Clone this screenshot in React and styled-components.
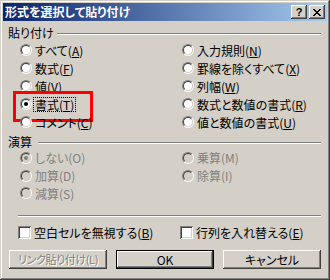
import React from 'react';
import styled, { createGlobalStyle } from 'styled-components';

const Global = createGlobalStyle`
  html, body { margin: 0; padding: 0; background: #d4d0c8; }
  * { box-sizing: border-box; }
`;

const FONT = `"Noto Sans CJK JP", "Liberation Sans", sans-serif`;

const Window = styled.div`
  width: 330px;
  height: 280px;
  padding: 3px;
  background: #d4d0c8;
  box-shadow: inset -1px -1px #404040, inset 1px 1px #d4d0c8,
    inset -2px -2px #808080, inset 2px 2px #ffffff;
  display: flex;
  flex-direction: column;
  font-family: ${FONT};
  font-size: 12px;
  color: #000;
  font-feature-settings: "palt";
`;

const TitleBar = styled.div`
  height: 18px;
  flex: none;
  display: flex;
  align-items: center;
  padding: 0 2px;
  background: linear-gradient(to right, #0a246a, #a6caf0);
`;

const Title = styled.span`
  flex: 1;
  color: #fff;
  font-weight: bold;
  font-size: 12px;
  line-height: 18px;
  white-space: nowrap;
`;

const CaptionButtons = styled.div`
  display: flex;
  gap: 2px;
`;

const CaptionButton = styled.div`
  width: 16px;
  height: 14px;
  background: #d4d0c8;
  box-shadow: inset -1px -1px #404040, inset 1px 1px #ffffff,
    inset -2px -2px #808080, inset 2px 2px #d4d0c8;
  display: flex;
  align-items: center;
  justify-content: center;
  font-family: "Liberation Sans", sans-serif;
  font-weight: bold;
  font-size: 11px;
  line-height: 14px;
  color: #000;
`;

const Body = styled.div`
  flex: 1;
  padding: 5px 6px 0 5px;
  display: flex;
  flex-direction: column;
`;

const GroupHeader = styled.div`
  display: flex;
  align-items: center;
  height: 14px;
  gap: ${(p) => p.$gap || 3}px;
  margin-top: ${(p) => p.$mt || 0}px;
`;

const GroupLabel = styled.span`
  line-height: 14px;
  white-space: nowrap;
`;

const Etched = styled.div`
  flex: 1;
  height: 2px;
  margin-top: 2px;
  border-top: 1px solid #808080;
  border-bottom: 1px solid #ffffff;
`;

const Separator = styled.div`
  height: 2px;
  border-top: 1px solid #808080;
  border-bottom: 1px solid #ffffff;
  margin: ${(p) => p.$mt}px 0 0 10px;
`;

const OptionGrid = styled.div`
  display: grid;
  grid-template-columns: 162px 1fr;
  grid-auto-rows: ${(p) => p.$row}px;
  margin: ${(p) => p.$mt || 0}px 0 0 12px;
`;

const Option = styled.div`
  position: relative;
  display: flex;
  align-items: center;
  gap: 2px;
  white-space: nowrap;
  color: ${(p) => (p.$disabled ? '#808080' : '#000')};

  ${(p) =>
    p.$highlight &&
    `
    &::after {
      content: '';
      position: absolute;
      left: -7px;
      top: -4px;
      width: 74px;
      height: 25px;
      border: 3px solid #ff0000;
      pointer-events: none;
    }
  `}
`;

const RadioCircle = styled.span`
  flex: none;
  width: 12px;
  height: 12px;
  border-radius: 50%;
  border: 1px solid;
  border-color: #808080 #ffffff #ffffff #808080;
  display: flex;
`;

const RadioInner = styled.span`
  flex: 1;
  border-radius: 50%;
  border: 1px solid;
  border-color: #404040 #d4d0c8 #d4d0c8 #404040;
  background: ${(p) => (p.$disabled ? '#d4d0c8' : '#ffffff')};
  display: flex;
  align-items: center;
  justify-content: center;
`;

const RadioDot = styled.span`
  width: 4px;
  height: 4px;
  border-radius: 50%;
  background: ${(p) => (p.$disabled ? '#808080' : '#000')};
`;

const Label = styled.span`
  line-height: 13px;
  padding: 0 1px;
  outline: ${(p) => (p.$focus ? '1px dotted #000' : 'none')};
`;

const CheckRow = styled.div`
  display: grid;
  grid-template-columns: 162px 1fr;
  height: 16px;
  margin: 7px 0 0 10px;
`;

const CheckItem = styled.div`
  display: flex;
  align-items: center;
  gap: 2px;
  white-space: nowrap;
`;

const CheckBox = styled.span`
  flex: none;
  width: 13px;
  height: 13px;
  background: #fff;
  box-shadow: inset 1px 1px #808080, inset -1px -1px #ffffff,
    inset 2px 2px #404040, inset -2px -2px #d4d0c8;
`;

const ButtonRow = styled.div`
  display: flex;
  gap: 9px;
  margin: 10px 0 0 1px;
`;

const Button = styled.div`
  width: 98px;
  height: 19px;
  display: flex;
  align-items: center;
  justify-content: center;
  background: #d4d0c8;
  white-space: nowrap;
  line-height: 13px;
  font-size: ${(p) => (p.$tight ? 11 : 12)}px;
  letter-spacing: ${(p) => (p.$tight ? '-0.4px' : '0')};
  color: ${(p) => (p.$disabled ? '#808080' : '#000')};
  text-shadow: ${(p) => (p.$disabled ? '1px 1px 0 #ffffff' : 'none')};
  box-shadow: ${(p) =>
    p.$default
      ? 'inset 0 0 0 1px #000, inset -2px -2px #404040, inset 2px 2px #ffffff, inset -3px -3px #808080'
      : 'inset -1px -1px #404040, inset 1px 1px #ffffff, inset -2px -2px #808080, inset 2px 2px #d4d0c8'};
`;

const closeGlyph = [
  'XX....XX',
  '.XX..XX.',
  '..XXXX..',
  '...XX...',
  '..XXXX..',
  '.XX..XX.',
  'XX....XX',
];

function CloseIcon() {
  const rects = [];
  closeGlyph.forEach((row, y) =>
    row.split('').forEach((c, x) => {
      if (c === 'X') rects.push(<rect key={`${x}-${y}`} x={x} y={y} width="1" height="1" />);
    })
  );
  return (
    <svg width="8" height="7" viewBox="0 0 8 7" shapeRendering="crispEdges" fill="#000">
      {rects}
    </svg>
  );
}

function Radio({ checked, disabled }) {
  return (
    <RadioCircle>
      <RadioInner $disabled={disabled}>{checked && <RadioDot $disabled={disabled} />}</RadioInner>
    </RadioCircle>
  );
}

function Opt({ text, k, checked, disabled, highlight, focus }) {
  return (
    <Option $disabled={disabled} $highlight={highlight}>
      <Radio checked={checked} disabled={disabled} />
      <Label $focus={focus}>
        {text}(
        {disabled ? k : <u>{k}</u>})
      </Label>
    </Option>
  );
}

const pasteOptions = [
  { text: 'すべて', k: 'A' },
  { text: '入力規則', k: 'N' },
  { text: '数式', k: 'F' },
  { text: '罫線を除くすべて', k: 'X' },
  { text: '値', k: 'V' },
  { text: '列幅', k: 'W' },
  { text: '書式', k: 'T', checked: true, highlight: true, focus: true },
  { text: '数式と数値の書式', k: 'R' },
  { text: 'コメント', k: 'C' },
  { text: '値と数値の書式', k: 'U' },
];

const opOptions = [
  { text: 'しない', k: 'O', checked: true },
  { text: '乗算', k: 'M' },
  { text: '加算', k: 'D' },
  { text: '除算', k: 'I' },
  { text: '減算', k: 'S' },
];

export default function App() {
  return (
    <>
      <Global />
      <Window>
        <TitleBar>
          <Title>形式を選択して貼り付け</Title>
          <CaptionButtons>
            <CaptionButton>?</CaptionButton>
            <CaptionButton>
              <CloseIcon />
            </CaptionButton>
          </CaptionButtons>
        </TitleBar>
        <Body>
          <GroupHeader>
            <GroupLabel>貼り付け</GroupLabel>
            <Etched />
          </GroupHeader>
          <OptionGrid $mt={1} $row={18}>
            {pasteOptions.map((o) => (
              <Opt key={o.k} {...o} />
            ))}
          </OptionGrid>
          <GroupHeader $mt={4} $gap={6}>
            <GroupLabel>演算</GroupLabel>
            <Etched />
          </GroupHeader>
          <OptionGrid $row={17.75}>
            {opOptions.map((o) => (
              <Opt key={o.k} {...o} disabled />
            ))}
          </OptionGrid>
          <Separator $mt={12.75} />
          <CheckRow>
            <CheckItem>
              <CheckBox />
              <Label>
                空白セルを無視する(<u>B</u>)
              </Label>
            </CheckItem>
            <CheckItem>
              <CheckBox />
              <Label>
                行列を入れ替える(<u>E</u>)
              </Label>
            </CheckItem>
          </CheckRow>
          <ButtonRow>
            <Button $disabled $tight>リンク貼り付け(L)</Button>
            <Button $default>OK</Button>
            <Button>キャンセル</Button>
          </ButtonRow>
        </Body>
      </Window>
    </>
  );
}
